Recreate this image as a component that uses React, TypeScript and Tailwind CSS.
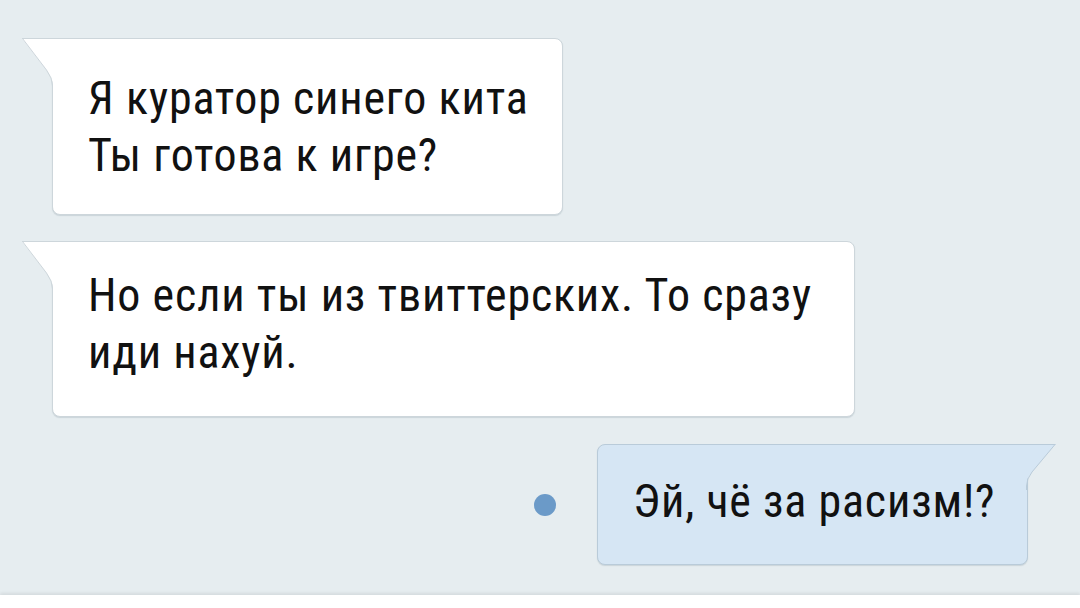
import React from 'react';

type Side = 'in' | 'out';

interface Message {
  id: number;
  side: Side;
  lines: string[];
}

const messages: Message[] = [
  { id: 1, side: 'in', lines: ['Я куратор синего кита', 'Ты готова к игре?'] },
  { id: 2, side: 'in', lines: ['Но если ты из твиттерских. То сразу', 'иди нахуй.'] },
  { id: 3, side: 'out', lines: ['Эй, чё за расизм!?'] },
];

// хвостик входящего сообщения (слева сверху)
const TailLeft = () => (
  <svg
    className="absolute -top-px left-[-31px]"
    width="33"
    height="52"
    viewBox="0 0 33 52"
  >
    <path d="M0 0.5 H33 V52 H31 V48 Q31 40 24.5 32 L0 0.5 Z" fill="#ffffff" />
    <path
      d="M0.5 0.5 L24.5 32 Q30.5 40 30.5 48 V52"
      fill="none"
      stroke="#cdd6db"
      strokeWidth="1"
    />
    <path d="M0 0.5 H33" stroke="#cdd6db" strokeWidth="1" />
  </svg>
);

// хвостик исходящего сообщения (справа сверху)
const TailRight = () => (
  <svg
    className="absolute -top-px right-[-30px]"
    width="33"
    height="46"
    viewBox="0 0 33 46"
  >
    <path d="M33 0.5 H0 V46 H2 V42 Q2 35 8 28 L31 0.5 Z" fill="#d6e6f4" />
    <path
      d="M31 0.5 L8 28 Q2.5 35 2.5 42 V46"
      fill="none"
      stroke="#b9cbd9"
      strokeWidth="1"
    />
    <path d="M0 0.5 H31.5" stroke="#b9cbd9" strokeWidth="1" />
  </svg>
);

const Bubble = ({ message, className }: { message: Message; className: string }) => {
  const isOut = message.side === 'out';
  return (
    <div
      className={`relative ${className} ${
        isOut
          ? 'bg-[#d6e6f4] border border-[#b9cbd9] rounded-lg rounded-tr-none'
          : 'bg-white border border-[#cdd6db] rounded-lg rounded-tl-none'
      } shadow-[0_1px_1px_rgba(120,140,150,0.25)]`}
    >
      {isOut ? <TailRight /> : <TailLeft />}
      {message.lines.map((line) => (
        <p key={line} className="whitespace-nowrap">
          {line}
        </p>
      ))}
    </div>
  );
};

export default function App() {
  return (
    <div
      className="w-[1080px] h-[608px] flex flex-col bg-[#e6edf0] text-[#111111] overflow-hidden"
      style={{ fontFamily: 'Roboto, "Noto Sans", sans-serif' }}
    >
      <div className="flex-1 flex flex-col pl-[52px] pt-[38px] text-[46px] leading-[57px] font-stretch-condensed tracking-[0.8px]">
        {/* входящие */}
        <Bubble message={messages[0]} className="w-[511px] h-[177px] pl-[35px] pt-[31px]" />
        <Bubble message={messages[1]} className="w-[803px] h-[176px] mt-[26px] pl-[35px] pt-[25px]" />

        {/* исходящее + индикатор непрочитанного */}
        <div className="flex items-center justify-end mt-[27px] pr-[52px]">
          <span className="w-[22px] h-[22px] rounded-full bg-[#6b9ac8] mr-[41px]" />
          <Bubble message={messages[2]} className="w-[431px] h-[121px] pl-[35px] pt-[28px]" />
        </div>
      </div>

      {/* нижняя панель */}
      <div className="h-[13px] bg-white shadow-[0_-2px_3px_rgba(0,0,0,0.08)]" />
    </div>
  );
}
